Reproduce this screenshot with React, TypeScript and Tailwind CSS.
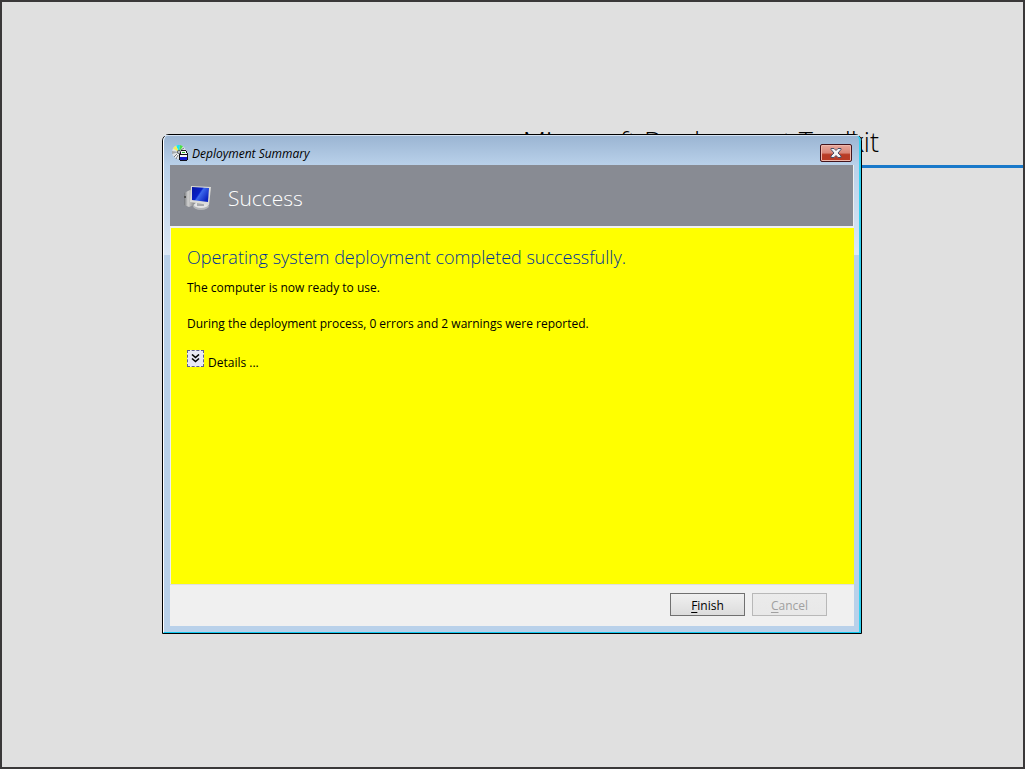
import React from "react";

interface ButtonProps {
    label: string;
    disabled?: boolean;
}

const FooterButton: React.FC<ButtonProps> = ({ label, disabled }) => {
    return (
        <button
            type="button"
            disabled={disabled}
            className="h-[23px] w-[75px] border border-[#707070] bg-linear-to-b from-[#f0f0f0] to-[#dcdcdc] pt-[2px] text-[12px] leading-[18px] text-black disabled:border-[#b8b8b8] disabled:from-[#ebebeb] disabled:to-[#e8e8e8] disabled:text-[#a0a0a0]"
        >
            <span className="underline underline-offset-2">{label[0]}</span>
            {label.slice(1)}
        </button>
    );
};

const SetupIcon: React.FC = () => {
    return (
        <svg width="16" height="16" viewBox="0 0 16 16" aria-hidden="true">
            <circle cx="7" cy="7" r="7" fill="#dfe3e6" />
            <path d="M7 7L4 .7A7 7 0 0 1 8 0z" fill="#18e4f4" />
            <path d="M7 7L1 3.500A7 7 0 0 1 4 .7z" fill="#f4f058" />
            <path d="M7 7L8 0A7 7 0 0 1 11 1.300z" fill="#48e048" />
            <path d="M7 7L0 6v3z" fill="#a4a8ac" />
            <path d="M7 7l-4 5 2.500 1.500z" fill="#ffffff" />
            <path d="M2 12l3-3M9 5l3-2M4 14l2-4" stroke="#787c80" />
            <circle cx="7" cy="7" r="2" fill="#54585c" />
            <circle cx="7" cy="7" r="1" fill="#d0d8e0" />
            <g shapeRendering="crispEdges">
                <path d="M9 6h5v1h1v3h1v5H8v-5h1z" fill="#f4f4f4" />
                <path d="M9 5h5v1H9zM14 6h1v2h-1zM15 8h1v2h-1zM8 7h1v2H8zM7 9h8v1H7zM7 10h1v5H7zM15 10h1v5h-1zM8 15h7v1H8z" fill="#101018" />
                <path d="M10 7h3v1h-3z" fill="#28b828" />
                <path d="M8 12h7v3H8z" fill="#1018d0" />
            </g>
        </svg>
    );
};

const ComputerIcon: React.FC = () => {
    return (
        <svg width="28" height="28" viewBox="0 0 28 28" aria-hidden="true">
            <defs>
                <linearGradient id="screen" x1="0" y1="0" x2="1" y2="0.6">
                    <stop offset="0" stopColor="#0818a0" />
                    <stop offset="0.48" stopColor="#0820c8" />
                    <stop offset="0.56" stopColor="#3c68ec" />
                    <stop offset="1" stopColor="#0c24c0" />
                </linearGradient>
                <linearGradient id="tower" x1="0" y1="0" x2="1" y2="0">
                    <stop offset="0" stopColor="#707378" />
                    <stop offset="0.4" stopColor="#d0d0d0" />
                    <stop offset="1" stopColor="#8c8c8c" />
                </linearGradient>
            </defs>
            <path d="M1 9l6-3 4 1v14l-5 2-5-2z" fill="url(#tower)" />
            <path d="M1 12h2v2H1z" fill="#505050" />
            <ellipse cx="18" cy="22" rx="8" ry="4" fill="#b4b6b8" />
            <ellipse cx="18" cy="21" rx="7" ry="3" fill="#e4e4e4" />
            <path d="M14 18l7 1v3h-7z" fill="#a8aaac" />
            <path d="M8 2l20 1-2 18-19-3z" fill="#dcdcd8" />
            <path d="M9 3l17 1-1 14-16-2z" fill="url(#screen)" />
        </svg>
    );
};

const CloseIcon: React.FC = () => {
    return (
        <svg width="12" height="10" viewBox="0 0 12 10" aria-hidden="true">
            <path d="M1 .5h3l2 2 2-2h3v1L8 5l3 3v1.500H8l-2-2-2 2H1V8l3-3-3-3.500z" fill="#f4f4f4" stroke="#4c5068" />
        </svg>
    );
};

const App: React.FC = () => {
    return (
        <div className="relative min-h-screen overflow-hidden border-2 border-[#3a3839] bg-[#e0e0e0] font-['Open_Sans','Noto_Sans',sans-serif]">
            <div className="ml-auto w-1/2 border-b-3 border-[#1979ca] pt-[122px] pr-[144px] pb-[6px] text-right text-[27px] leading-[35px] font-light whitespace-nowrap text-black">
                Microsoft Deployment Toolkit
            </div>

            <main className="absolute top-[132px] left-[160px] flex h-[500px] w-[700px] flex-col rounded-t-[7px] border border-black bg-[#b9d1ea]">
                <div className="flex grow flex-col rounded-t-[6px] border-r-2 border-b border-l border-r-[#30d0f0] border-b-[#10c8f0] border-l-white bg-linear-to-b from-[#9ab4d2] to-[#b9d1ea] to-[30px]">
                    <div className="flex h-[30px] shrink-0 items-center border-t border-[#d4e2f2] pt-[5px] pr-[7px] pl-[8px]">
                        <SetupIcon />
                        <h1 className="ml-1 grow pt-[2px] text-[12px] leading-[18px] text-black italic">Deployment Summary</h1>
                        <button
                            type="button"
                            aria-label="Close"
                            className="flex h-[18px] w-[32px] items-center justify-center rounded-[2px] border border-[#43141c] bg-linear-to-b from-[#e8a89c] from-0% via-[#d98779] via-48% to-[#b83c26] to-60% shadow-[inset_0_0_0_1px_#efb8ac]"
                        >
                            <CloseIcon />
                        </button>
                    </div>

                    <div className="flex grow bg-linear-to-b from-[#b9d1ea] to-[#dce8f5] to-[90px] bg-[length:100%_90px] bg-no-repeat pr-[5px] pb-[6px] pl-[6px]">
                        <div className="flex grow flex-col bg-[#f0f0f0]">
                            <header className="flex h-[63px] items-center border-r border-b-2 border-[#f0f0f0] bg-[#888b93] pt-[4px] pl-[13px]">
                                <ComputerIcon />
                                <h2 className="ml-[17px] text-[21px] leading-[30px] font-light text-white">Success</h2>
                            </header>

                            <section className="ml-px grow bg-[#ffff00] px-4 pt-[16px] text-[12px] leading-[18px] text-black">
                                <h3 className="text-[18px] leading-[27px] font-light text-[#003399]">
                                    Operating system deployment completed successfully.
                                </h3>
                                <p className="mt-[8px]">The computer is now ready to use.</p>
                                <p className="mt-[18px]">During the deployment process, 0 errors and 2 warnings were reported.</p>
                                <div className="mt-[17px] flex items-start gap-1">
                                    <button
                                        type="button"
                                        id="details"
                                        className="flex size-[17px] items-center justify-center border border-dashed border-[#606090] bg-[#e8e8f4]"
                                    >
                                        <svg width="9" height="9" viewBox="0 0 9 9" fill="none" stroke="#000" strokeWidth="1.6" aria-hidden="true">
                                            <path d="M1 .5l3.500 3L8 .5M1 4.500l3.500 3 3.500-3" />
                                        </svg>
                                    </button>
                                    <label htmlFor="details" className="pt-[4px]">
                                        Details ...
                                    </label>
                                </div>
                            </section>

                            <footer className="flex h-[42px] items-start justify-end gap-[7px] border-t border-[#dfdfdf] pt-[8px] pr-[27px]">
                                <FooterButton label="Finish" />
                                <FooterButton label="Cancel" disabled />
                            </footer>
                        </div>
                    </div>
                </div>
            </main>
        </div>
    );
};

export default App;
